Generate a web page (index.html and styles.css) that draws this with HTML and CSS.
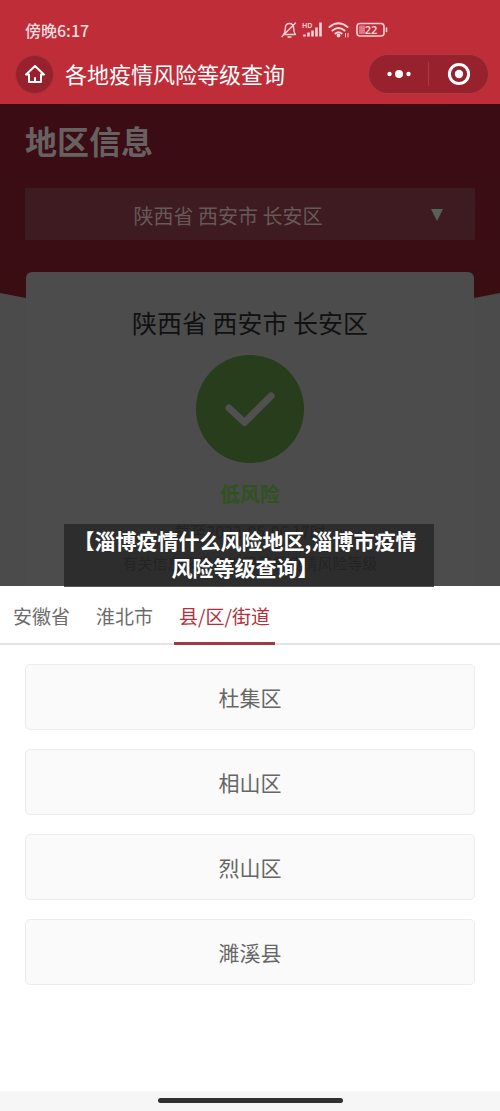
FILE: index.html
```html
<!DOCTYPE html>
<html lang="zh-CN">
<head>
<meta charset="utf-8">
<meta name="viewport" content="width=device-width, initial-scale=1">
<title>各地疫情风险等级查询</title>
<link rel="stylesheet" href="styles.css">
</head>
<body>
<div class="app">
  <header class="top">
    <div class="status">
      <span class="time">傍晚6:17</span>
      <span class="status-icons">
        <svg width="108" height="20" viewBox="0 0 108 20" fill="none" stroke="#f6d3d5" stroke-width="1.4" stroke-linecap="round" stroke-linejoin="round">
          <path d="M2.500 14.500h12c-1.500-1.500-1.800-3-1.800-6C12.700 5.500 11 3.500 8.500 3.500S4.300 5.500 4.300 8.500c0 3-.3 4.500-1.800 6zM7 17h3M1 16.500 14.500 3"/>
          <path d="M23.500 16.500v-2M27.500 16.500v-4M31.500 16.500v-6M35.500 16.500v-9M39.500 16.500v-14" stroke-width="2.600" stroke-linecap="butt"/>
          <text class="hd" x="21" y="8">HD</text>
          <path d="M48.500 7q9-7.500 18 0M51.500 10.500q6-5 12 0M54.500 13.500q3-2.500 6 0" stroke-width="2"/>
          <circle cx="57.500" cy="15.500" r="1.200" fill="#f6d3d5"/>
          <path d="M64.500 13.500v3.500M67 13.500v3.500" stroke-width="1"/>
          <rect x="76" y="3.500" width="27" height="12.500" rx="3" stroke-width="1.600"/>
          <rect x="78" y="5.500" width="6" height="8.500" rx="1" fill="#dc7980" stroke="none"/>
          <path d="M105.500 8v3.500" stroke-width="1.600"/>
          <text class="battery" x="90" y="14" text-anchor="middle">22</text>
        </svg>
      </span>
    </div>
    <div class="nav">
      <button class="home" aria-label="首页">
        <svg width="22" height="22" viewBox="0 0 22 22" fill="none" stroke="#fff" stroke-width="2" stroke-linejoin="round" stroke-linecap="round"><path d="M2 11.500 11 3l9 8.500h-3V19H5v-7.500zM11 19v-4"/></svg>
      </button>
      <h1 class="title">各地疫情风险等级查询</h1>
      <div class="capsule">
        <button class="cap-btn" aria-label="更多">
          <svg width="26" height="24" viewBox="0 0 26 24" fill="#fff"><circle cx="3.500" cy="12" r="2.200"/><circle cx="13" cy="12" r="4"/><circle cx="22.500" cy="12" r="2.200"/></svg>
        </button>
        <button class="cap-btn" aria-label="关闭">
          <svg width="24" height="24" viewBox="0 0 24 24" fill="none"><circle cx="12" cy="12" r="9.600" stroke="#fff" stroke-width="3"/><circle cx="12" cy="12" r="4.200" fill="#fff"/></svg>
        </button>
      </div>
    </div>
  </header>

  <main class="region">
    <h2 class="heading">地区信息</h2>
    <button class="picker"><span>陕西省 西安市 长安区</span><svg class="arrow" width="12" height="12" viewBox="0 0 12 12" fill="#596059"><path d="M0 0h12L6 12z"/></svg></button>
    <section class="card">
      <h3 class="place">陕西省 西安市 长安区</h3>
      <svg class="check" width="108" height="108" viewBox="0 0 108 108" fill="none"><circle cx="54" cy="54" r="54" fill="#273d1c"/><path d="M33 53 48.500 67.500 75 41" stroke="#505050" stroke-width="7" stroke-linecap="round" stroke-linejoin="round"/></svg>
      <strong class="level">低风险</strong>
      <p class="asof">截至2022-05-06 17时</p>
      <p class="source">有关信息来自各地卫健委疫情风险等级</p>
    </section>
    <div class="banner">【淄博疫情什么风险地区,淄博市疫情<br>风险等级查询】</div>
  </main>

  <section class="sheet">
    <nav class="tabs">
      <button class="tab">安徽省</button>
      <button class="tab">淮北市</button>
      <button class="tab active">县/区/街道</button>
    </nav>
    <div class="options">
      <button class="option">杜集区</button>
      <button class="option">相山区</button>
      <button class="option">烈山区</button>
      <button class="option">濉溪县</button>
    </div>
  </section>
  <footer class="gesture"><span class="handle"></span></footer>
</div>
</body>
</html>
```
FILE: styles.css
```css
* { box-sizing: border-box; }
body, h1, h2, h3, p { margin: 0; }
body, button { font-family: "Noto Sans CJK SC", "Noto Sans", sans-serif; }
button { border: 0; padding: 0; background: none; color: inherit; cursor: pointer; }
svg { display: block; flex: none; }

.app { display: flex; flex-direction: column; min-height: 100vh; background: #fff; }

.top { background: #bf2d39; color: #fff; padding: 18px 11px 10px 15px; }
.status { display: flex; align-items: center; height: 24px; padding-left: 10px; }
.time { flex: 1; font-size: 16px; font-weight: 500; color: #f9dcdd; }
.status-icons { margin-right: 100px; }
.battery { font-family: "Noto Sans", sans-serif; font-size: 11px; font-weight: 600; fill: #f6d3d5; stroke: none; }
.hd { font-family: "Noto Sans", sans-serif; font-size: 7px; font-weight: 600; fill: #f6d3d5; stroke: none; }
.nav { display: flex; align-items: center; margin-top: 12px; height: 40px; }
.home { display: flex; align-items: center; justify-content: center; width: 39px; height: 39px; border: 1px solid #a9333d; border-radius: 50%; background: #97222d; }
.title { flex: 1; margin-left: 11px; padding-bottom: 2px; font-size: 22px; line-height: 32px; font-weight: 400; white-space: nowrap; }
.capsule { display: flex; align-items: center; width: 121px; height: 40px; border: 1px solid #ab3943; border-radius: 20px; background: #97222d; }
.cap-btn { flex: 1; display: flex; align-items: center; justify-content: center; height: 24px; }
.cap-btn + .cap-btn { border-left: 1px solid #aa3943; }

.region { position: relative; padding: 14px 25px 0; background: linear-gradient(#3b0c14, #390f12); }
.region::before { content: ""; position: absolute; inset: 189px 0 0; background: #4b4b4b; clip-path: polygon(0 0, 50% 48px, 100% 0, 100% 100%, 0 100%); }
.heading { font-size: 32px; line-height: 44px; font-weight: 700; color: #686161; }
.picker { position: relative; display: block; width: 100%; height: 52px; margin-top: 26px; padding-top: 2px; padding-right: 44px; background: #3d1b20; color: #66595a; font-size: 20px; }
.arrow { position: absolute; right: 32px; top: 21px; }
.card { position: relative; display: flex; flex-direction: column; align-items: center; margin: 32px 1px 0; padding: 32px 0 11px; border-radius: 6px 6px 0 0; background: #4c4c4c; color: #111; }
.place { font-size: 25px; line-height: 36px; font-weight: 400; }
.check { margin-top: 15px; }
.level { margin-top: 16px; font-size: 20px; line-height: 30px; font-weight: 700; color: #31521f; }
.asof, .source { font-size: 15px; line-height: 24px; color: #1c1c1c; }
.asof { margin-top: 10px; font-size: 16px; }
.source { margin-top: 8px; }
.banner { position: absolute; left: 64px; right: 66px; bottom: -1px; z-index: 1; padding: 3px 8px 6px 0; background: rgba(37, 37, 37, 0.78); color: #fff; font-size: 21px; line-height: 27px; font-weight: 700; text-align: center; white-space: nowrap; }

.sheet { flex: 1; background: #fff; }
.tabs { display: flex; gap: 16px; height: 59px; padding-left: 8px; border-bottom: 2px solid #e5e5e5; }
.tab { height: 59px; padding: 3px 5px 0; border-bottom: 3px solid transparent; color: #6c6c6c; font-size: 19px; }
.tab.active { border-bottom-color: #a23843; color: #b62e3b; }
.options { display: flex; flex-direction: column; gap: 19px; padding: 19px 25px; }
.option { height: 66px; border: 1px solid #ececec; border-radius: 5px; background: #fafafa; color: #666; font-size: 21px; }
.gesture { display: flex; justify-content: center; height: 20px; padding-top: 7px; background: #f6f6f6; }
.handle { width: 37%; height: 5px; border-radius: 3px; background: #303030; }
```
